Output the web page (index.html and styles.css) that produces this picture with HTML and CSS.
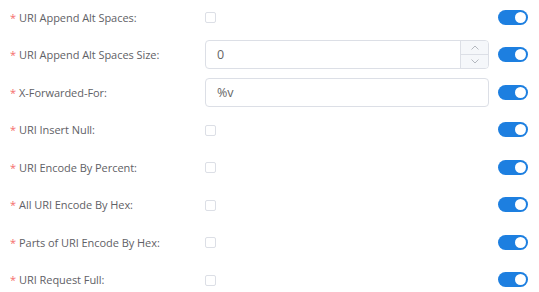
FILE: index.html
```html
<!DOCTYPE html>
<html lang="en">
<head>
    <meta charset="UTF-8">
    <title>URI Options</title>
    <link rel="stylesheet" href="styles.css">
</head>
<body>
    <form class="option-form">
        <div class="form-row">
            <label class="form-label"><span class="required">*</span>URI Append Alt Spaces:</label>
            <div class="form-control"><span class="checkbox"></span></div>
            <span class="switch"></span>
        </div>
        <div class="form-row">
            <label class="form-label"><span class="required">*</span>URI Append Alt Spaces Size:</label>
            <div class="form-control">
                <div class="number-input">
                    <span class="input-value">0</span>
                    <div class="spinner">
                        <span class="spin-btn">
                            <svg width="8" height="5" viewBox="0 0 8 5"><path d="M0.5 4.5 L4 1 L7.5 4.5" fill="none" stroke="#b4b8bf" stroke-width="1"/></svg>
                        </span>
                        <span class="spin-btn">
                            <svg width="8" height="5" viewBox="0 0 8 5"><path d="M0.5 0.5 L4 4 L7.5 0.5" fill="none" stroke="#b4b8bf" stroke-width="1"/></svg>
                        </span>
                    </div>
                </div>
            </div>
            <span class="switch"></span>
        </div>
        <div class="form-row">
            <label class="form-label"><span class="required">*</span>X-Forwarded-For:</label>
            <div class="form-control">
                <div class="text-input"><span class="input-value">%v</span></div>
            </div>
            <span class="switch"></span>
        </div>
        <div class="form-row">
            <label class="form-label"><span class="required">*</span>URI Insert Null:</label>
            <div class="form-control"><span class="checkbox"></span></div>
            <span class="switch"></span>
        </div>
        <div class="form-row">
            <label class="form-label"><span class="required">*</span>URI Encode By Percent:</label>
            <div class="form-control"><span class="checkbox"></span></div>
            <span class="switch"></span>
        </div>
        <div class="form-row">
            <label class="form-label"><span class="required">*</span>All URI Encode By Hex:</label>
            <div class="form-control"><span class="checkbox"></span></div>
            <span class="switch"></span>
        </div>
        <div class="form-row">
            <label class="form-label"><span class="required">*</span>Parts of URI Encode By Hex:</label>
            <div class="form-control"><span class="checkbox"></span></div>
            <span class="switch"></span>
        </div>
        <div class="form-row">
            <label class="form-label"><span class="required">*</span>URI Request Full:</label>
            <div class="form-control"><span class="checkbox"></span></div>
            <span class="switch"></span>
        </div>
    </form>
</body>
</html>
```

FILE: styles.css
```css
* {
    margin: 0;
    padding: 0;
    box-sizing: border-box;
}

body {
    font-family: 'Open Sans', 'Noto Sans', sans-serif;
    background: #fff;
    color: #606266;
    padding: 2.5px 11px 0 10px;
}

.form-row {
    display: grid;
    grid-template-columns: 186px 284px 30px;
    column-gap: 9px;
    align-items: center;
    height: 29px;
    margin-bottom: 8.5px;
}

.form-label {
    font-size: 11px;
    letter-spacing: -0.05px;
    color: #5f6166;
}

.required {
    color: #f56c6c;
    margin-right: 3px;
}

.form-control {
    display: flex;
    align-items: center;
}

.checkbox {
    display: block;
    width: 11px;
    height: 11px;
    border: 1px solid #dcdfe6;
    border-radius: 2px;
    background: #fff;
    margin-top: 1px;
}

.number-input,
.text-input {
    display: flex;
    width: 100%;
    height: 29px;
    border: 1px solid #dcdfe6;
    border-radius: 4px;
    overflow: hidden;
}

.input-value {
    flex: 1;
    display: flex;
    align-items: center;
    padding-left: 11px;
    font-size: 12.5px;
    color: #666;
}

.spinner {
    width: 28px;
    display: flex;
    flex-direction: column;
    background: #f5f7fa;
    border-left: 1px solid #dcdfe6;
}

.spin-btn {
    flex: 1;
    display: flex;
    align-items: center;
    justify-content: center;
}

.spin-btn + .spin-btn {
    border-top: 1px solid #dcdfe6;
}

.switch {
    position: relative;
    display: block;
    width: 30px;
    height: 15px;
    border-radius: 8px;
    background: #1d7fe0;
}

.switch::after {
    content: "";
    position: absolute;
    top: 2px;
    right: 2px;
    width: 11px;
    height: 11px;
    border-radius: 50%;
    background: #fff;
}
```
